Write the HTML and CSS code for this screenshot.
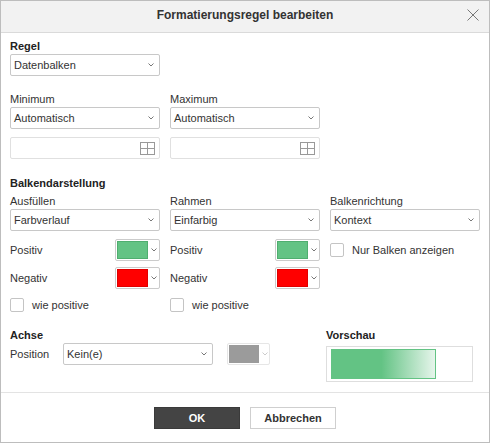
FILE: index.html
```html
<!DOCTYPE html>
<html lang="de">
<head>
<meta charset="utf-8">
<title>Formatierungsregel bearbeiten</title>
<link rel="stylesheet" href="styles.css">
</head>
<body>
<div class="dialog">
  <div class="header">
    <span></span>
    <span class="title">Formatierungsregel bearbeiten</span>
    <span class="close"><svg width="12" height="12" viewBox="0 0 12 12"><path d="M0.5 0.5 L11.5 11.5 M11.5 0.5 L0.5 11.5" stroke="#777" stroke-width="1" fill="none"/></svg></span>
  </div>

  <div class="content">
    <div class="regel">
      <div class="label bold">Regel</div>
      <div class="select"><span>Datenbalken</span><svg class="chev" width="6" height="4" viewBox="0 0 6 4"><polyline points="0.5,0.5 3,3 5.5,0.5" fill="none" stroke="#777"/></svg></div>
    </div>

    <div class="grid3 minmax">
      <div class="col">
        <div class="label">Minimum</div>
        <div class="select"><span>Automatisch</span><svg class="chev" width="6" height="4" viewBox="0 0 6 4"><polyline points="0.5,0.5 3,3 5.5,0.5" fill="none" stroke="#777"/></svg></div>
        <div class="input"><svg width="15" height="13" viewBox="0 0 15 13"><rect x="0.5" y="0.5" width="14" height="12" fill="none" stroke="#999"/><path d="M7.5 0.5 V12.5 M0.5 6.5 H14.5" stroke="#999" fill="none"/></svg></div>
      </div>
      <div class="col">
        <div class="label">Maximum</div>
        <div class="select"><span>Automatisch</span><svg class="chev" width="6" height="4" viewBox="0 0 6 4"><polyline points="0.5,0.5 3,3 5.5,0.5" fill="none" stroke="#777"/></svg></div>
        <div class="input"><svg width="15" height="13" viewBox="0 0 15 13"><rect x="0.5" y="0.5" width="14" height="12" fill="none" stroke="#999"/><path d="M7.5 0.5 V12.5 M0.5 6.5 H14.5" stroke="#999" fill="none"/></svg></div>
      </div>
    </div>

    <div class="heading bars-heading">Balkendarstellung</div>

    <div class="grid3 bars">
      <div class="col">
        <div class="label">Ausfüllen</div>
        <div class="select"><span>Farbverlauf</span><svg class="chev" width="6" height="4" viewBox="0 0 6 4"><polyline points="0.5,0.5 3,3 5.5,0.5" fill="none" stroke="#777"/></svg></div>
        <div class="colorrow first"><span>Positiv</span><span class="swatch"><span class="color green"></span><svg class="chev" width="6" height="4" viewBox="0 0 6 4"><polyline points="0.5,0.5 3,3 5.5,0.5" fill="none" stroke="#777"/></svg></span></div>
        <div class="colorrow second"><span>Negativ</span><span class="swatch"><span class="color red"></span><svg class="chev" width="6" height="4" viewBox="0 0 6 4"><polyline points="0.5,0.5 3,3 5.5,0.5" fill="none" stroke="#777"/></svg></span></div>
        <div class="checkrow"><span class="checkbox"></span><span>wie positive</span></div>
      </div>
      <div class="col">
        <div class="label">Rahmen</div>
        <div class="select"><span>Einfarbig</span><svg class="chev" width="6" height="4" viewBox="0 0 6 4"><polyline points="0.5,0.5 3,3 5.5,0.5" fill="none" stroke="#777"/></svg></div>
        <div class="colorrow first"><span>Positiv</span><span class="swatch"><span class="color green"></span><svg class="chev" width="6" height="4" viewBox="0 0 6 4"><polyline points="0.5,0.5 3,3 5.5,0.5" fill="none" stroke="#777"/></svg></span></div>
        <div class="colorrow second"><span>Negativ</span><span class="swatch"><span class="color red"></span><svg class="chev" width="6" height="4" viewBox="0 0 6 4"><polyline points="0.5,0.5 3,3 5.5,0.5" fill="none" stroke="#777"/></svg></span></div>
        <div class="checkrow"><span class="checkbox"></span><span>wie positive</span></div>
      </div>
      <div class="col">
        <div class="label">Balkenrichtung</div>
        <div class="select"><span>Kontext</span><svg class="chev" width="6" height="4" viewBox="0 0 6 4"><polyline points="0.5,0.5 3,3 5.5,0.5" fill="none" stroke="#777"/></svg></div>
        <div class="checkrow tall"><span class="checkbox"></span><span>Nur Balken anzeigen</span></div>
      </div>
    </div>

    <div class="bottom">
      <div class="achse">
        <div class="heading">Achse</div>
        <div class="posrow">
          <span class="poslabel">Position</span>
          <div class="select"><span>Kein(e)</span><svg class="chev" width="6" height="4" viewBox="0 0 6 4"><polyline points="0.5,0.5 3,3 5.5,0.5" fill="none" stroke="#777"/></svg></div>
          <span class="swatch disabled"><span class="color gray"></span><svg class="chev" width="6" height="4" viewBox="0 0 6 4"><polyline points="0.5,0.5 3,3 5.5,0.5" fill="none" stroke="#ccc"/></svg></span>
        </div>
      </div>
      <div class="vorschau">
        <div class="heading">Vorschau</div>
        <div class="preview"><div class="bar"></div></div>
      </div>
    </div>
  </div>

  <div class="footer">
    <button class="btn primary">OK</button>
    <button class="btn">Abbrechen</button>
  </div>
</div>
</body>
</html>
```

FILE: styles.css
```css
* { box-sizing: border-box; }

body {
  margin: 0;
  background: #fff;
  font-family: "Liberation Sans", Arial, sans-serif;
  font-size: 11px;
  color: #333;
}

.dialog {
  width: 490px;
  height: 443px;
  border: 1px solid #bdbdbd;
  display: flex;
  flex-direction: column;
  background: #fff;
}

.header {
  height: 32px;
  background: #f2f2f2;
  border-bottom: 1px solid #dadada;
  display: grid;
  grid-template-columns: 1fr auto 1fr;
  align-items: start;
  padding-top: 7px;
}

.title {
  font-size: 12px;
  font-weight: bold;
  line-height: 14px;
  color: #333;
}

.close {
  justify-self: end;
  margin-right: 10px;
  margin-top: 1px;
  display: flex;
}

.content {
  flex: 1;
  padding: 6px 0 0 9px;
}

.label, .heading {
  height: 14px;
  line-height: 14px;
  margin-bottom: 1px;
  white-space: nowrap;
}

.bold, .heading { font-weight: bold; color: #222; }

.select {
  width: 150px;
  height: 22px;
  border: 1px solid #c8c8c8;
  border-radius: 2px;
  display: flex;
  align-items: center;
  justify-content: space-between;
  padding: 0 5px 0 3px;
  background: #fff;
  color: #333;
}

.chev { display: block; flex: none; }

.grid3 {
  display: grid;
  grid-template-columns: 150px 150px 150px;
  column-gap: 10px;
}

.minmax { margin-top: 16px; }

.input {
  margin-top: 8px;
  height: 22px;
  border: 1px solid #e0e0e0;
  border-radius: 2px;
  display: flex;
  align-items: center;
  justify-content: flex-end;
  padding-right: 4px;
}

.bars-heading { margin-top: 17px; margin-bottom: 4px; }

.colorrow {
  height: 22px;
  display: flex;
  align-items: center;
  justify-content: space-between;
}
.colorrow.first { margin-top: 8px; }
.colorrow.second { margin-top: 6px; }

.swatch {
  width: 45px;
  height: 22px;
  border: 1px solid #cbcbcb;
  border-radius: 2px;
  padding: 1px;
  display: flex;
  align-items: center;
  background: #fff;
}
.swatch .chev { margin-left: 3px; }

.color {
  width: 31px;
  height: 18px;
  border: 1px solid rgba(0,0,0,0.18);
}
.green { background: #63c384; border-color: #4fae6f; }
.red { background: #ff0000; border-color: #e00000; }
.gray { background: #9b9b9b; border-color: #9b9b9b; }

.swatch.disabled { border-color: #e6e6e6; }

.checkrow {
  margin-top: 9px;
  height: 14px;
  display: flex;
  align-items: center;
  gap: 8px;
  white-space: nowrap;
}
.checkrow.tall { margin-top: 8px; height: 22px; }

.checkbox {
  width: 14px;
  height: 14px;
  border: 1px solid #c4c4c4;
  border-radius: 2px;
  background: #fff;
  flex: none;
}

.bottom {
  margin-top: 16px;
  display: flex;
}

.achse { width: 316px; }

.posrow {
  margin-top: 1px;
  display: flex;
  align-items: center;
  height: 22px;
}
.poslabel { width: 53px; }
.posrow .swatch { margin-left: 14px; width: 43px; }

.vorschau { width: 147px; }
.vorschau .heading { margin-bottom: 4px; }

.preview {
  height: 36px;
  border: 1px solid #dedede;
  padding: 1px 4px;
  display: flex;
  align-items: center;
}

.bar {
  width: 105px;
  height: 30px;
  border: 1px solid #63c384;
  background: linear-gradient(to right, #63c384 0%, #63c384 48%, #e6f5eb 100%);
}

.footer {
  height: 50px;
  border-top: 1px solid #e3e3e3;
  display: flex;
  justify-content: center;
  align-items: flex-start;
  gap: 10px;
  padding-top: 14px;
}

.btn {
  width: 86px;
  height: 22px;
  font-family: "Liberation Sans", Arial, sans-serif;
  font-size: 11px;
  font-weight: bold;
  color: #333;
  background: #fff;
  border: 1px solid #cfcfcf;
  border-radius: 0;
  padding: 0;
}
.btn.primary {
  background: #444;
  border-color: #3a3a3a;
  color: #fff;
}
```
